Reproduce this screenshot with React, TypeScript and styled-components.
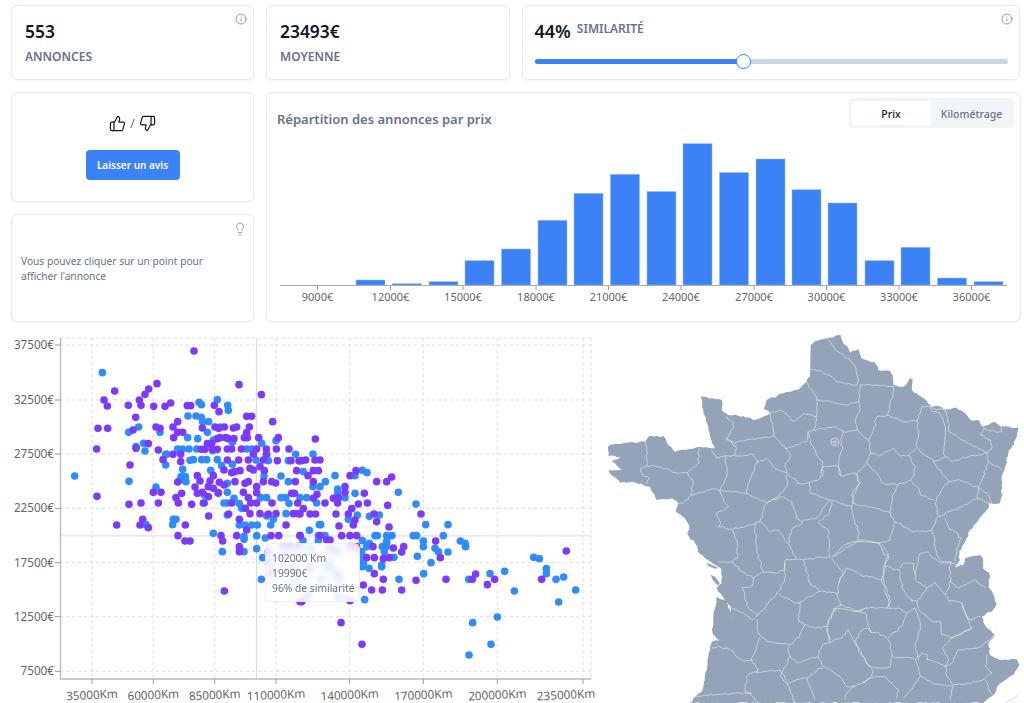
import React from 'react'
import styled, { createGlobalStyle } from 'styled-components'
import { Info, Lightbulb, ThumbsDown, ThumbsUp } from 'lucide-react'

const GlobalStyle = createGlobalStyle`
  html, body {
    margin: 0;
    height: 703px;
    overflow: hidden;
    background: #fff;
    font-family: 'Noto Sans', 'Open Sans', sans-serif;
  }
`

const Page = styled.div`
  width: 1024px;
  padding-top: 5px;
  box-sizing: border-box;
`

const TopRow = styled.div`
  display: grid;
  grid-template-columns: 243px 243.5px 498.5px;
  column-gap: 12px;
  padding-left: 11px;
  height: 75px;
`

const MidRow = styled.div`
  display: grid;
  grid-template-columns: 243px 755px;
  column-gap: 12px;
  margin-top: 12px;
  padding-left: 11px;
  height: 230px;
`

const BottomRow = styled.div`
  display: flex;
  margin-top: 8px;
  height: 373px;
`

const Card = styled.div`
  position: relative;
  box-sizing: border-box;
  background: #fff;
  border: 1px solid #e5e9f0;
  border-radius: 6px;
  box-shadow: 0 1px 2px rgba(15, 23, 42, 0.04);
`

const StatCard = styled(Card)`
  padding: 13px 13px 0;
`

const SliderCard = styled(StatCard)`
  padding-left: 12px;
`

const Value = styled.div<{ $large?: boolean }>`
  font-size: ${({ $large }) => ($large ? '18px' : '17.4px')};
  line-height: 24px;
  font-weight: 600;
  color: #0f172a;
`

const Label = styled.div`
  margin-top: 6px;
  font-size: 12px;
  line-height: 16px;
  font-weight: 600;
  color: #64748b;
`

const CornerIcon = styled.span`
  position: absolute;
  top: 7px;
  right: 6px;
  display: flex;
  color: #7b8798;
`

const SliderHead = styled.div`
  display: flex;
  align-items: flex-start;
  gap: 6px;
  ${Label} {
    margin-top: 2px;
  }
`

const Track = styled.div`
  position: relative;
  height: 5px;
  margin: 16px 0 0;
  width: 473px;
  border-radius: 3px;
  background: #cbd5e1;
`

const TrackFill = styled.div<{ $pct: number }>`
  width: ${({ $pct }) => $pct}%;
  height: 100%;
  border-radius: 3px;
  background: #3b82f6;
`

const Thumb = styled.div<{ $pct: number }>`
  position: absolute;
  top: -5px;
  left: calc(${({ $pct }) => $pct}% - 7.5px);
  box-sizing: border-box;
  width: 15px;
  height: 15px;
  border-radius: 50%;
  background: #fff;
  border: 1.5px solid #3b82f6;
`

const LeftColumn = styled.div`
  display: grid;
  grid-template-rows: 110px 108px;
  row-gap: 12px;
`

const ReviewCard = styled(Card)`
  display: flex;
  flex-direction: column;
  align-items: center;
  padding-top: 20px;
`

const Thumbs = styled.div`
  display: flex;
  align-items: center;
  gap: 4px;
  height: 20px;
  font-size: 13px;
  color: #64748b;
  svg {
    color: #0f172a;
  }
`

const ReviewButton = styled.button`
  margin-top: 16.5px;
  width: 94px;
  height: 30px;
  padding: 0;
  border: none;
  border-radius: 4px;
  background: #3b82f6;
  color: #fff;
  font-family: inherit;
  font-size: 10px;
  font-weight: 600;
`

const TipCard = styled(Card)`
  display: flex;
  align-items: center;
  padding: 0 9px;
`

const TipText = styled.p`
  margin: 2px 0 0;
  width: 190px;
  font-size: 10.2px;
  line-height: 15px;
  color: #64748b;
`

const ChartHead = styled.div`
  display: flex;
  justify-content: space-between;
  align-items: flex-start;
  height: 42px;
  padding: 5px 6px 0 10px;
  box-sizing: border-box;
`

const ChartTitle = styled.h3`
  margin: 12px 0 0;
  font-size: 13px;
  line-height: 18px;
  font-weight: 600;
  color: #64748b;
`

const Toggle = styled.div`
  display: flex;
  box-sizing: border-box;
  width: 165px;
  height: 30px;
  padding: 3px 2px;
  border-radius: 4px;
  background: #f1f5f9;
`

const ToggleItem = styled.div<{ $active?: boolean }>`
  flex: ${({ $active }) => ($active ? '0 0 80px' : '1')};
  display: flex;
  align-items: center;
  justify-content: center;
  padding-top: 1px;
  border-radius: 3px;
  font-size: 10.5px;
  font-weight: 500;
  background: ${({ $active }) => ($active ? '#fff' : 'transparent')};
  color: ${({ $active }) => ($active ? '#0f172a' : '#64748b')};
`

const Histogram = styled.svg`
  display: block;
  width: 753px;
  height: 186px;
  text {
    font-size: 11px;
    fill: #666;
  }
`

const ScatterBox = styled.div`
  position: relative;
  width: 600px;
  height: 373px;
`

const Scatter = styled.svg`
  display: block;
  text {
    font-size: 11.7px;
    fill: #666;
  }
`

const Tooltip = styled.div`
  position: absolute;
  left: 265px;
  top: 213px;
  box-sizing: border-box;
  width: 95px;
  height: 59px;
  padding: 7px 6px;
  border: 1px solid rgba(226, 232, 240, 0.7);
  border-radius: 6px;
  background: rgba(255, 255, 255, 0.8);
  backdrop-filter: blur(3px);
  font-size: 10.3px;
  line-height: 15px;
  white-space: nowrap;
  color: #64748b;
`

const MapSvg = styled.svg`
  display: block;
  width: 424px;
  height: 373px;
`

const bars = [
  [356, 280], [392.4, 283.7], [429, 281.7], [465, 260.7], [501.5, 249], [538, 220.3],
  [574, 193.3], [610.5, 174.3], [647, 191.5], [683, 143.7], [719.5, 172.5], [756, 159],
  [792, 189.7], [828, 203], [865, 260.7], [901, 247.3], [937.5, 278], [974, 281.7],
]

const priceTicks = [
  [317.5, '9000€'], [390.5, '12000€'], [463, '15000€'], [536, '18000€'], [608.5, '21000€'],
  [681, '24000€'], [754, '27000€'], [826.5, '30000€'], [899, '33000€'], [971.5, '36000€'],
] as [number, string][]

const yTicks = [
  [15, '37500€'], [70, '32500€'], [124, '27500€'], [178.3, '22500€'],
  [232.7, '17500€'], [286.7, '12500€'], [341.3, '7500€'],
] as [number, string][]

// tick position, then label centre: the last label is pulled back inside the chart
const xTicks = [
  [92, 92, '35000Km'], [153.3, 153.3, '60000Km'], [214.7, 214.7, '85000Km'], [276, 276, '110000Km'],
  [349.7, 349.7, '140000Km'], [423.3, 423.3, '170000Km'], [497.3, 497.3, '200000Km'], [583, 566, '235000Km'],
] as [number, number, string][]

// dots measured on a 3x grid, [x, y] pairs, left half then right half (offset 900)
const purpleLeft = [582,63,471,161,717,164,784,194,344,183,446,177,435,193,418,210,312,210,322,228,385,226,423,226,461,229,495,229,512,219,562,227,572,227,643,226,657,245,407,262,533,275,294,295,323,295,399,300,468,291,480,295,519,291,533,307,548,307,521,323,607,294,645,291,673,291,656,295,700,294,710,291,748,291,740,259,755,259,740,308,818,275,290,357,408,355,445,341,475,360,519,373,542,373,489,389,542,395,390,405,604,358,615,358,622,341,635,340,652,326,660,323,677,323,685,326,702,326,733,323,742,323,776,323,835,323,829,357,799,357,867,357,637,358,652,358,682,357,695,357,724,357,770,357,745,390,716,390,682,390,760,372,799,373,790,390,832,392,873,392,897,393,890,422,780,410,793,422,672,420,705,425,720,422,695,428,750,415,760,420,640,437,592,437,533,456,600,453,585,471,592,490,630,453,625,470,640,475,658,457,672,465,705,455,735,460,745,455,790,455,815,455,827,459,886,455,607,487,625,500,545,490,528,503,535,519,575,523,610,519,655,488,695,519,730,487,745,503,752,519,770,519,770,470,770,488,816,519,883,490,893,519,875,490,460,487,483,487,475,519,291,499,387,523,423,519,626,558,736,535,750,551,686,552,718,568,780,551,805,552,828,551,880,551,895,551,858,585,350,585,420,585,428,568,445,593,556,585,740,600,534,617,555,633,570,633,663,617,668,633,710,617,718,650,718,665,813,617,836,617,900,617,673,783,900,815,850,650,870,650,895,650,805,665,807,697,815,730,880,715]
const blueLeft = [307,128,224,438,597,217,604,224,652,209,683,226,685,241,564,258,588,258,604,262,608,275,626,275,416,291,386,307,480,307,622,307,660,291,563,323,593,326,640,330,697,337,785,340,828,332,408,350,431,340,435,363,533,357,548,357,567,357,590,357,638,362,740,357,755,357,800,373,887,373,497,373,500,373,570,391,580,389,605,389,620,389,652,389,697,403,768,390,805,392,865,392,497,405,548,418,665,407,632,421,543,440,556,440,540,450,558,455,387,454,468,471,682,460,792,438,843,438,865,455,682,487,613,495,655,490,702,505,782,503,800,503,843,503,857,503,867,520,613,519,672,519,682,519,718,521,725,535,520,568,528,568,518,584,438,584,682,555,800,558,858,551,820,568,812,585,718,585,735,585,755,585,772,585,640,610,732,620,732,628,770,617,796,624,667,665,732,665,770,656,788,683,784,748,885,750]
const purpleRight = [46,327,5,392,17,390,45,390,60,390,24,437,40,422,55,422,40,455,40,505,51,493,75,519,10,536,30,552,47,552,0,552,135,470,135,487,100,505,115,503,113,519,175,522,202,519,193,490,168,422,150,437,230,455,260,455,275,441,263,526,108,552,145,552,155,536,165,570,160,585,117,588,222,552,230,575,267,591,363,552,125,617,150,617,170,617,60,617,90,630,80,630,0,617,280,654,311,650,305,666,200,683,223,683,250,686,268,683,223,731,250,748,215,780,247,780,305,780,348,751,407,633,421,683,438,748,527,732,517,748,562,764,584,748,725,748,799,663,219,650,190,765,150,812,123,878,186,943,5,815,150,650,170,650,92,657,30,715]
const blueRight = [39,372,10,425,105,437,76,455,60,470,39,470,165,437,187,421,201,428,113,477,113,490,135,503,165,490,295,487,348,522,50,519,20,503,0,503,172,555,208,559,238,555,145,568,377,584,444,584,58,584,62,584,28,601,55,617,75,617,225,617,232,617,260,617,276,617,340,617,350,617,430,617,370,633,370,650,481,633,495,640,497,650,405,655,415,665,444,666,352,679,393,698,282,682,260,640,260,633,247,650,258,650,253,665,245,705,245,710,208,640,200,650,187,632,185,665,190,700,207,715,371,731,297,748,506,748,570,731,614,724,643,783,701,682,718,686,739,716,739,731,768,748,791,741,827,780,776,816,592,861,518,878,573,943,507,975,194,809,9,632,55,632,30,660,85,700,85,715,65,748,110,730,118,748,25,795,115,800,113,665,187,680,187,695,187,710]

const toDots = (list: number[], offset: number, color: string) => {
  const dots: { x: number; y: number; color: string }[] = []
  for (let i = 0; i < list.length; i += 2) {
    dots.push({ x: (list[i] + offset) / 3, y: list[i + 1] / 3, color })
  }
  return dots
}

const PURPLE = '#7c3aff'
const BLUE = '#2f8cff'

const dots = [
  ...toDots(blueLeft, 0, BLUE),
  ...toDots(blueRight, 900, BLUE),
  ...toDots(purpleLeft, 0, PURPLE),
  ...toDots(purpleRight, 900, PURPLE),
]

// France, traced on a 3x grid of the map area
const coast =
  '632 45 645 33 680 25 722 15 728 35 745 55 752 68 775 58 785 85 805 92 825 97 835 120 870 122 878 135 880 165 905 170 918 165 930 143 938 150 936 180 955 195 980 212 995 232 1015 228 1040 238 1070 233 1095 250 1115 272 1135 270 1150 290 1185 275 1205 290 1255 292 1248 325 1225 370 1215 410 1205 440 1205 500 1200 520 1180 522 1165 520 1165 535 1135 570 1110 600 1100 625 1085 650 1075 680 1080 690 1065 712 1090 705 1095 685 1140 675 1150 690 1148 715 1170 735 1165 770 1180 795 1190 820 1175 845 1145 860 1155 885 1185 915 1165 940 1170 975 1200 990 1250 988 1258 1005 1240 1035 1195 1065 1185 1090 1150 1119 270 1119 280 1105 305 1085 315 1040 330 950 335 935 358 932 345 918 337 905 340 860 350 800 380 815 395 860 398 870 392 830 372 805 355 785 350 775 365 760 367 740 362 715 330 694 300 672 285 640 262 612 268 590 255 565 228 545 235 520 215 505 170 510 150 470 100 455 60 458 25 422 65 420 35 395 60 380 25 378 25 348 70 340 135 335 145 320 190 318 205 345 225 365 300 350 345 355 330 320 325 290 310 240 302 200 365 210 365 240 385 255 430 258 460 270 510 250 490 235 500 210 550 190 600 175 630 140'

const islands = [
  'M318 699L330 702L355 714L345 716L325 708Z',
  'M332 734L345 740L360 760L352 766L338 750Z',
]

const borders = [
  '138 335 142 370 140 408',
  '122 415 140 408 175 410 210 420 235 430 262 428 295 402 297 352',
  '122 415 128 435 150 445 140 462',
  '262 428 280 460 272 495 250 518 235 522',
  '272 495 315 485 340 475 358 482',
  '335 362 350 385 378 377 380 440 372 460 358 482',
  '380 377 405 375 408 350 378 325 400 295 400 280 378 258',
  '378 325 405 340 440 330 490 322 522 318 555 350',
  '510 250 520 300 522 318',
  '405 378 460 373 472 398 445 460 440 490',
  '472 398 500 385 520 410 560 430',
  '555 350 572 375 555 410 565 435 600 462 625 458 660 445 668 410',
  '358 482 440 490 500 518',
  '560 435 560 470 535 500 500 518',
  '358 482 372 515 385 530 370 543 350 548 362 578 355 590',
  '355 590 395 598 465 582 480 575 500 518',
  '510 250 540 240 570 262 582 275 610 250 650 262',
  '620 155 650 205 650 270 640 300 700 290 730 305 775 298',
  '555 355 620 335 625 305 640 300',
  '622 305 635 345 660 390 668 395 668 440',
  '668 410 715 408 720 435',
  '730 305 722 345 728 350 718 385 715 408',
  '628 458 630 490 690 510 755 530 760 495 778 460 768 430',
  '715 410 722 438 770 430 801 400',
  '500 518 550 500 575 515 590 565 608 575 575 600 565 640',
  '608 572 650 565 690 510',
  '655 578 690 550 695 515',
  '755 530 775 605 775 630 725 665 700 680',
  '655 578 685 600 690 680',
  '565 640 590 688 610 690 690 680',
  '480 575 510 605 535 600 565 640',
  '465 582 470 660 490 725 460 745',
  '395 598 412 640 412 685 395 695 355 695',
  '395 695 425 725 460 745',
  '490 727 530 730 555 720 555 690 590 688',
  '610 690 630 760 660 784',
  '460 744 455 769 425 774 445 834 475 854',
  '395 834 430 849 460 869 475 854',
  '475 854 530 789 555 754 555 699',
  '470 869 475 909 500 934 570 944 600 914 615 884',
  '535 789 590 819 600 819 595 869 615 884',
  '595 819 660 784 715 789',
  '615 884 645 894 680 889 710 829 725 824',
  '710 789 720 824 780 844 800 834',
  '715 759 740 714 780 734 845 749 870 834',
  '695 684 730 729 715 764 715 789',
  '695 679 735 644 770 634 840 639',
  '845 644 865 669 855 709 845 749',
  '680 894 690 934 665 949 655 979 590 999 570 979 565 949',
  '480 924 455 989 475 1019 470 1029',
  '335 954 355 949 390 959 430 994 455 989',
  '475 1019 440 1039 435 1084 455 1089',
  '270 1104 330 1094 450 1089 475 1119',
  '470 1029 540 1019 560 1054',
  '570 979 550 1019 540 1039 560 1059 620 1044 670 1009',
  '655 979 665 1004 720 1039 740 1069 765 1069 815 1039 820 1024 775 959 760 929 745 899 725 924 685 939',
  '620 1044 630 1069 645 1109',
  '560 1059 585 1119',
  '735 1109 740 1089 765 1069',
  '786 1059 811 1044 851 1039 876 1059 896 1079 891 1104',
  '766 934 781 904 801 894 816 909 836 907 864 929 876 974 871 1009 851 1014 811 1009 806 1004 786 974 766 934',
  '686 934 681 889 701 834 741 839 766 844 796 849',
  '796 849 806 889 816 909',
  '766 844 796 834 861 834 896 834 921 849',
  '921 849 906 889 864 924',
  '921 849 946 834 961 879 961 899 946 949 956 989',
  '876 974 886 984 936 984 946 989',
  '836 639 851 674 866 679 851 714 851 749 871 814 861 834',
  '851 709 898 719 906 774 936 814',
  '901 714 911 699 941 701 946 749 981 774 966 794 951 814 936 814',
  '946 734 961 669 986 667 1021 699 1051 699 1071 704',
  '981 774 1006 757 1036 794 1046 814 1066 814 1086 819 1101 864 1116 894 1056 924 1026 914 1021 874 996 874 956 839 951 814',
  '1051 694 1051 754 1036 794',
  '1051 754 1076 774 1116 754 1126 749 1156 774',
  '1086 819 1101 859 1116 869 1141 859',
  '1116 894 1056 924 1026 954 1046 989 1036 1009 1061 994 1076 959 1146 949 1161 934 1186 914',
  '946 989 966 969 981 974 981 989 1026 1004 1036 1009',
  '1036 1009 1041 1039 1061 1064 1086 1064 1136 1054 1156 1044 1176 1029',
  '1161 974 1156 1009 1176 1029',
  '946 989 961 1039 941 1069 911 1104',
  '961 1039 996 1059 1061 1069 1051 1109',
  '1156 1049 1166 1079 1186 1099',
  '683 25 706 60 746 85 766 110 776 150 771 165',
  '632 118 666 125 696 140 711 155 771 165',
  '781 165 881 170',
  '781 165 776 215 781 240 766 270 771 295 806 335',
  '650 210 696 215 736 225 776 215',
  '881 170 876 205 864 255',
  '864 255 831 260 821 300 806 335 811 370 801 400',
  '864 255 916 275 951 272',
  '951 272 966 228 991 230 998 245 1021 250 1036 300 1031 365 1036 380',
  '998 235 1036 240 1046 290 1046 305',
  '1046 305 1086 330 1161 370',
  '951 272 956 310 948 350 961 365 1001 395',
  '811 370 836 378 881 355 901 378 926 375 948 355',
  '926 375 946 410 941 440 931 450 956 475 961 495 1001 510',
  '801 400 826 425 851 460 891 465 931 450',
  '1001 395 1026 430 1046 455 1011 500 1006 520 1016 560',
  '1001 395 1036 380 1056 395 1106 380 1161 370',
  '1161 370 1166 395 1146 450 1136 475',
  '1166 395 1206 420',
  '1046 455 1076 448 1106 460 1136 475 1161 490 1176 520',
  '1136 475 1133 505 1166 518',
  '1133 505 1086 530 1046 545 1016 560',
  '1151 295 1170 303 1205 305 1205 290',
  '1151 295 1141 315 1171 330 1176 350 1161 370',
  '766 430 781 460 756 490 761 520 831 535 871 550 881 490 896 465',
  '871 550 885 575 940 605 995 600 1015 560',
  '885 575 875 610 870 630 840 640 775 630',
  '995 600 1005 630 1010 675 1025 695 1055 695',
  '1035 565 1045 590 1085 625 1070 655 1065 695',
]

// departments are hand-traced with long segments, this breaks them into small wobbly ones
const roughen = (points: string, amount: number) => {
  const n = points.split(' ').map(Number)
  let seed = n[0] * 7 + n[1] * 13
  const wobble = () => {
    seed = (seed * 1103515245 + 12345) % 2147483648
    return (seed / 2147483648 - 0.5) * 2 * amount
  }
  const out: string[] = [`${n[0]} ${n[1]}`]
  for (let i = 2; i < n.length; i += 2) {
    const [x0, y0, x1, y1] = [n[i - 2], n[i - 1], n[i], n[i + 1]]
    const steps = Math.max(1, Math.round(Math.hypot(x1 - x0, y1 - y0) / 9))
    for (let s = 1; s < steps; s++) {
      const t = s / steps
      out.push(`${(x0 + (x1 - x0) * t + wobble()).toFixed(1)} ${(y0 + (y1 - y0) * t + wobble()).toFixed(1)}`)
    }
    out.push(`${x1} ${y1}`)
  }
  return out.join(' ')
}

const HistogramChart = () => (
  <Histogram viewBox="267 135 753 186">
    {bars.map(([x, top]) => (
      <rect key={x} x={x} y={top} width={29} height={285 - top} fill="#3b82f6" stroke="#93bbfb" strokeWidth={0.5} />
    ))}
    <line x1={280} x2={1007} y1={285.5} y2={285.5} stroke="#aaa" strokeWidth={1.2} />
    {priceTicks.map(([x, label]) => (
      <g key={label}>
        <line x1={x} x2={x} y1={286} y2={290} stroke="#999" />
        <text x={x} y={301} textAnchor="middle">{label}</text>
      </g>
    ))}
  </Histogram>
)

const ScatterChart = () => (
  <Scatter width={600} height={373} viewBox="0 0 600 373">
    <g stroke="#ddd" strokeDasharray="3 3">
      <line x1={60} x2={591} y1={8} y2={8} />
      <line x1={591} x2={591} y1={8} y2={349} />
      {yTicks.map(([y]) => <line key={y} x1={60} x2={591} y1={y} y2={y} />)}
      {xTicks.map(([x]) => <line key={x} x1={x} x2={x} y1={8} y2={349} />)}
    </g>
    <line x1={60} x2={591} y1={205.7} y2={205.7} stroke="#e8eaed" strokeWidth={2} />
    <line x1={256.5} x2={256.5} y1={8} y2={349} stroke="#d9dbe0" strokeWidth={1.2} />
    {dots.map((d, i) => (
      <circle key={i} cx={d.x} cy={d.y} r={3.8} fill={d.color} />
    ))}
    <path d="M60.5 8V349H591" fill="none" stroke="#bbb" strokeWidth={1.4} />
    {yTicks.map(([y, label]) => (
      <g key={label}>
        <line x1={55} x2={60} y1={y} y2={y} stroke="#999" />
        <text x={54} y={y + 4} textAnchor="end">{label}</text>
      </g>
    ))}
    {xTicks.map(([x, labelX, label]) => (
      <g key={label}>
        <line x1={x} x2={x} y1={349} y2={354} stroke="#999" />
        <text x={labelX} y={369} textAnchor="middle" transform={`rotate(-3 ${labelX} 365)`}>{label}</text>
      </g>
    ))}
  </Scatter>
)

const FranceMap = () => (
  <MapSvg viewBox="0 0 1272 1119">
    <polygon points={roughen(coast, 2.5)} fill="#94a3b8" />
    {islands.map(d => <path key={d} d={d} fill="#94a3b8" />)}
    <g fill="none" stroke="#e2e8f0" strokeWidth={2} strokeLinejoin="round">
      {borders.map(points => <polyline key={points} points={roughen(points, 3)} />)}
      <circle cx={705} cy={336} r={12} />
      <path d="M693 336H717M705 328V344" />
    </g>
    <line x1={1218} y1={1118} x2={1254} y2={1096} stroke="#b6c0cf" strokeWidth={2} />
  </MapSvg>
)

const App = () => {
  const similarity = 44.2
  return (
    <Page>
      <GlobalStyle />
      <TopRow>
        <StatCard>
          <CornerIcon><Info size={12} strokeWidth={1.6} /></CornerIcon>
          <Value>553</Value>
          <Label>ANNONCES</Label>
        </StatCard>
        <StatCard>
          <Value>23493€</Value>
          <Label>MOYENNE</Label>
        </StatCard>
        <SliderCard>
          <CornerIcon><Info size={12} strokeWidth={1.6} /></CornerIcon>
          <SliderHead>
            <Value $large>44%</Value>
            <Label>SIMILARITÉ</Label>
          </SliderHead>
          <Track>
            <TrackFill $pct={similarity} />
            <Thumb $pct={similarity} />
          </Track>
        </SliderCard>
      </TopRow>
      <MidRow>
        <LeftColumn>
          <ReviewCard>
            <Thumbs>
              <ThumbsUp size={17} strokeWidth={1.7} /> / <ThumbsDown size={17} strokeWidth={1.7} />
            </Thumbs>
            <ReviewButton>Laisser un avis</ReviewButton>
          </ReviewCard>
          <TipCard>
            <CornerIcon><Lightbulb size={14} strokeWidth={1.5} color="#8794a6" /></CornerIcon>
            <TipText>Vous pouvez cliquer sur un point pour afficher l'annonce</TipText>
          </TipCard>
        </LeftColumn>
        <Card>
          <ChartHead>
            <ChartTitle>Répartition des annonces par prix</ChartTitle>
            <Toggle>
              <ToggleItem $active>Prix</ToggleItem>
              <ToggleItem>Kilométrage</ToggleItem>
            </Toggle>
          </ChartHead>
          <HistogramChart />
        </Card>
      </MidRow>
      <BottomRow>
        <ScatterBox>
          <ScatterChart />
          <Tooltip>
            102000 Km
            <br />
            19990€
            <br />
            96% de similarité
          </Tooltip>
        </ScatterBox>
        <FranceMap />
      </BottomRow>
    </Page>
  )
}

export default App
